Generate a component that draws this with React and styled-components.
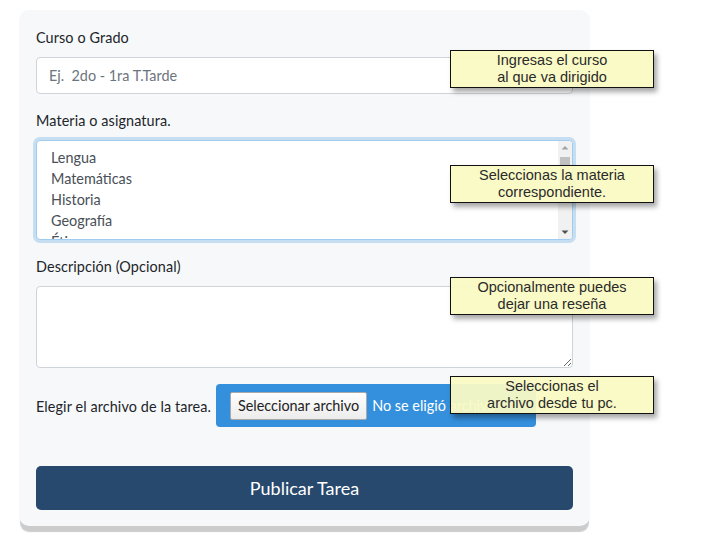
import React from 'react'
import styled, { createGlobalStyle } from 'styled-components'

const GlobalStyle = createGlobalStyle`
	body {
		margin: 0;
		background: #fff;
		font-family: Lato, 'Noto Sans', sans-serif;
		color: #212529;
	}
`

const materias = ['Lengua', 'Matemáticas', 'Historia', 'Geografía', 'Ética', 'Ciencias Naturales']

const tips = [
	{ top: 50, text: ['Ingresas el curso', 'al que va dirigido'] },
	{ top: 165, text: ['Seleccionas la materia', 'correspondiente.'] },
	{ top: 277, text: ['Opcionalmente puedes', 'dejar una reseña'] },
	{ top: 376, text: ['Seleccionas el', 'archivo desde tu pc.'] },
]

function Arrow({ down }) {
	return (
		<ArrowBtn>
			<svg width="14" height="14" viewBox="0 0 14 14">
				{down ? (
					<path d="M3.5 5.5h7L7 9z" fill="#505050" />
				) : (
					<path d="M3.5 8.5h7L7 5z" fill="#a3a3a3" />
				)}
			</svg>
		</ArrowBtn>
	)
}

function App() {
	return (
		<Page>
			<GlobalStyle />
			<Card>
				<Group>
					<Label>Curso o Grado</Label>
					<Input placeholder="Ej.  2do - 1ra T.Tarde" />
				</Group>
				<Group>
					<Label>Materia o asignatura.</Label>
					<ListBox role="listbox">
						<Options>
							{materias.map(m => (
								<Option key={m}>{m}</Option>
							))}
						</Options>
						<ScrollBar>
							<Arrow />
							<Track>
								<Thumb />
							</Track>
							<Arrow down />
						</ScrollBar>
					</ListBox>
				</Group>
				<Group>
					<Label>Descripción (Opcional)</Label>
					<TextArea />
				</Group>
				<FileRow>
					<FileLabel>Elegir el archivo de la tarea.</FileLabel>
					<FileBox>
						<FileButton type="button">Seleccionar archivo</FileButton>
						<span>No se eligió archivo</span>
					</FileBox>
				</FileRow>
				<Submit type="button">Publicar Tarea</Submit>
			</Card>
			{tips.map(t => (
				<Tip key={t.top} top={t.top}>
					{t.text.map(line => (
						<div key={line}>{line}</div>
					))}
				</Tip>
			))}
		</Page>
	)
}

const Page = styled.div`
	position: relative;
	padding: 10px 0 0 19px;
	height: 546px;
`

const Card = styled.div`
	width: 537px;
	padding: 17px 17px 16px;
	background: #f7f8fa;
	border-radius: 10px;
	box-shadow: 0 7px 1px -1px rgba(0, 0, 0, 0.2);
	font-size: 14.4px;
	line-height: 1.6;
`

const Group = styled.div`
	margin-bottom: 16px;
`

const Label = styled.div`
	margin-bottom: 8px;
	line-height: 22px;
	letter-spacing: 0.1px;
`

const Input = styled.input`
	display: block;
	box-sizing: border-box;
	width: 100%;
	height: 37px;
	padding: 6px 12px;
	border: 1px solid #ced4da;
	border-radius: 4px;
	background: #fff;
	font: inherit;
	color: #495057;
	&::placeholder {
		color: #6c757d;
	}
`

const ListBox = styled.div`
	display: flex;
	box-sizing: border-box;
	height: 100px;
	border: 1px solid #a1cbef;
	border-radius: 4px;
	background: #fff;
	box-shadow: 0 0 0 3px rgba(52, 144, 220, 0.25);
	overflow: hidden;
	color: #495057;
`

const Options = styled.div`
	flex: 1;
	padding: 6px 0 0 12px;
	overflow: hidden;
`

const Option = styled.div`
	padding: 0 2px;
	line-height: 21px;
`

const ScrollBar = styled.div`
	display: flex;
	flex-direction: column;
	width: 14px;
	background: #f1f1f1;
`

const ArrowBtn = styled.div`
	height: 14px;
	svg {
		display: block;
	}
`

const Track = styled.div`
	flex: 1;
	padding: 2px 2px 0;
`

const Thumb = styled.div`
	height: 46px;
	background: #c1c1c1;
`

const TextArea = styled.textarea`
	display: block;
	box-sizing: border-box;
	width: 100%;
	height: 82px;
	padding: 6px 12px;
	border: 1px solid #ced4da;
	border-radius: 4px;
	background: #fff;
	font: inherit;
`

const FileRow = styled.div`
	display: flex;
	align-items: center;
	gap: 5px;
	margin-bottom: 39px;
`

const FileLabel = styled.span`
	padding-top: 3px;
	letter-spacing: 0.1px;
`

const FileBox = styled.div`
	display: flex;
	align-items: center;
	gap: 5px;
	box-sizing: border-box;
	width: 320px;
	height: 43px;
	padding: 0 14px;
	background: #3490dc;
	border-radius: 4px;
	color: #fff;
	white-space: nowrap;
	overflow: hidden;
`

const FileButton = styled.button`
	height: 28px;
	padding: 0 7px;
	border: 1px solid #a9a9a9;
	border-radius: 2px;
	background: linear-gradient(#fefefe, #ececec);
	font: inherit;
	color: #222;
`

const Submit = styled.button`
	display: block;
	width: 100%;
	height: 44px;
	border: none;
	border-radius: 5px;
	background: #27496d;
	color: #fff;
	font-family: inherit;
	font-size: 18px;
`

const Tip = styled.div`
	position: absolute;
	left: 450px;
	top: ${props => props.top}px;
	box-sizing: border-box;
	width: 204px;
	height: 38px;
	padding-top: 1px;
	border: 1px solid #111;
	background: rgba(250, 250, 196, 0.94);
	box-shadow: 3px 4px 5px rgba(0, 0, 0, 0.35);
	font-family: 'Liberation Sans', Arial, sans-serif;
	font-size: 14.5px;
	line-height: 17px;
	text-align: center;
	color: #2a2a2a;
`

export default App
